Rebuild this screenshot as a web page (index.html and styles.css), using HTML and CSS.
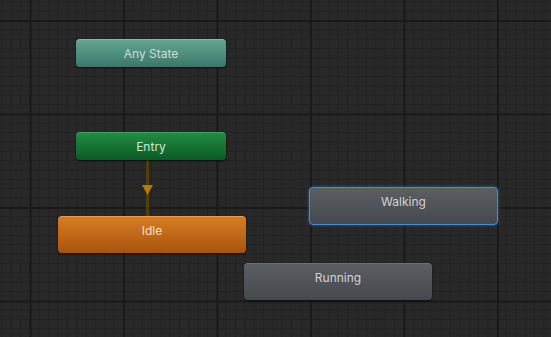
FILE: index.html
```html
<!DOCTYPE html>
<html>
<head>
  <link rel="stylesheet" href="styles.css">
</head>
<body>
  <div class="graph">
    <svg class="graph__link" width="551" height="337">
      <line x1="147.5" y1="160" x2="147.5" y2="216" stroke="#563a12" stroke-width="3"/>
      <polygon points="142,185 153,185 147.5,195" fill="#b3790f"/>
    </svg>

    <div class="node node--any" style="left: 76px; top: 39px; width: 150px; height: 28px;">Any State</div>
    <div class="node node--entry" style="left: 76px; top: 132px; width: 150px; height: 28px;">Entry</div>
    <div class="node node--default" style="left: 58px; top: 216px; width: 188px; height: 37px;">Idle</div>
    <div class="node node--state node--selected" style="left: 309px; top: 187px; width: 189px; height: 38px;">Walking</div>
    <div class="node node--state" style="left: 244px; top: 263px; width: 188px; height: 37px;">Running</div>
  </div>
</body>
</html>
```
FILE: styles.css
```css
html,
body {
  margin: 0;
  height: 100%;
  overflow: hidden;
}

.graph {
  position: relative;
  width: 551px;
  height: 337px;
  background-color: #282828;
  background-image:
    linear-gradient(to right, #1a1a1a 2px, transparent 2px),
    linear-gradient(to bottom, #1a1a1a 2px, transparent 2px),
    linear-gradient(to right, #222222 1px, transparent 1px),
    linear-gradient(to bottom, #222222 1px, transparent 1px);
  background-size: 93.5px 93.5px, 93.5px 93.5px, 9.35px 9.35px, 9.35px 9.35px;
  background-position: 29.5px 0, 0 20px, 29.5px 0, 0 20px;
  font-family: Inter, "Noto Sans", sans-serif;
  font-size: 12px;
}

.graph__link {
  position: absolute;
  left: 0;
  top: 0;
}

.node {
  position: absolute;
  box-sizing: border-box;
  display: flex;
  align-items: center;
  justify-content: center;
  border-radius: 4px;
  box-shadow: 0 1px 2px rgba(0, 0, 0, 0.6);
  color: #d2d2d2;
}

.node--any {
  background: linear-gradient(#62a592, #3b7768);
  border-top: 1px solid #7cbcaa;
  color: #c9dcd6;
}

.node--entry {
  background: linear-gradient(#238c40, #0a5a24);
  border-top: 1px solid #3ea35a;
  color: #d3e6d8;
}

.node--default {
  background: linear-gradient(#d77c22, #a7540f);
  border-top: 1px solid #e69a4c;
  color: #f1e2d4;
  padding-bottom: 10px;
}

.node--state {
  background: linear-gradient(#5b5e63, #45484c);
  border-top: 1px solid #6c6f74;
  padding-bottom: 10px;
}

.node--selected {
  border: 1px solid #3d8fe0;
  box-shadow: 0 0 3px rgba(61, 143, 224, 0.7);
}
```
